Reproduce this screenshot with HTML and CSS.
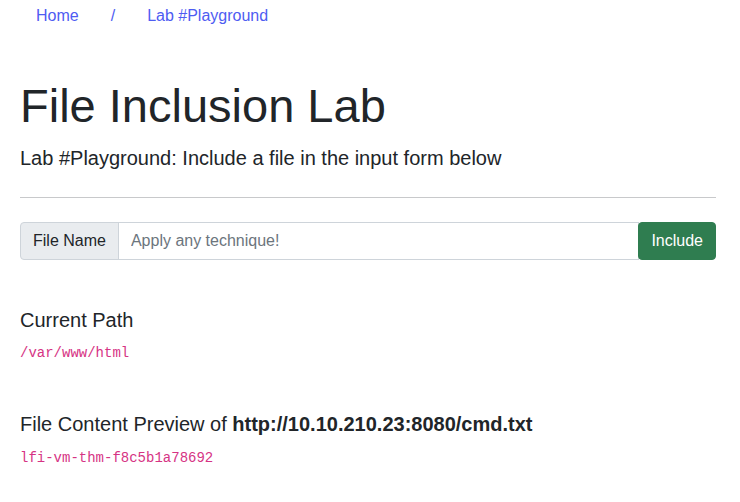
FILE: index.html
```html
<!DOCTYPE html>
<html lang="en">
<head>
<meta charset="utf-8">
<title>File Inclusion Lab</title>
<link rel="stylesheet" href="styles.css">
</head>
<body>
<div class="container">
  <nav class="crumbs">
    <a class="crumb" href="#">Home</a>
    <a class="crumb" href="#">/</a>
    <a class="crumb" href="#">Lab #Playground</a>
  </nav>
  <h1 class="title">File Inclusion Lab</h1>
  <p class="lead">Lab #Playground: Include a file in the input form below</p>
  <hr class="rule">
  <form class="input-group">
    <span class="addon">File Name</span>
    <input class="field" type="text" placeholder="Apply any technique!">
    <button class="btn" type="button">Include</button>
  </form>
  <section class="section first">
    <h5 class="heading">Current Path</h5>
    <code class="code">/var/www/html</code>
  </section>
  <section class="section second">
    <h5 class="heading">File Content Preview of <b>http://10.10.210.23:8080/cmd.txt</b></h5>
    <code class="code">lfi-vm-thm-f8c5b1a78692</code>
  </section>
</div>
</body>
</html>
```

FILE: styles.css
```css
* { box-sizing: border-box; }
html, body { margin: 0; background: #fff; }
body {
  font-family: "Liberation Sans", Arial, sans-serif;
  font-size: 16px;
  line-height: 1.5;
  color: #212529;
}
.container { padding: 0 24px 0 20px; }
.crumbs { display: flex; padding-top: 4px; }
.crumb {
  padding: 0 16px;
  line-height: 24px;
  color: #4e5cf2;
  text-decoration: none;
}
.title {
  margin: 50px 0 9px;
  font-size: 47px;
  line-height: 1.2;
  font-weight: 400;
}
.lead { margin: 0; font-size: 20px; line-height: 30px; }
.rule {
  margin: 24px 0;
  border: 0;
  border-top: 1px solid #c8c9cb;
  height: 0;
}
.input-group { display: flex; height: 38px; }
.addon {
  padding: 0 12px;
  display: flex;
  align-items: center;
  background: #e9ecef;
  border: 1px solid #ced4da;
  border-radius: 4px 0 0 4px;
  color: #212529;
  white-space: nowrap;
}
.field {
  flex: 1;
  min-width: 0;
  margin-left: -1px;
  padding: 0 12px;
  border: 1px solid #ced4da;
  border-radius: 0;
  font: inherit;
  color: #212529;
  outline: none;
}
.field::placeholder { color: #6c757d; opacity: 1; }
.btn {
  margin-left: -1px;
  padding: 0 12px;
  border: 1px solid #2f7d50;
  border-radius: 4px;
  background: #2f7d50;
  color: #fff;
  font: inherit;
}
.section.first { margin-top: 48px; }
.section.second { margin-top: 48px; }
.heading {
  margin: 0 0 11px;
  font-size: 20px;
  line-height: 24px;
  font-weight: 400;
}
.section.second .heading { margin-bottom: 12px; }
.heading b { font-weight: 700; }
.code {
  display: block;
  font-family: "Liberation Mono", "Courier New", monospace;
  font-size: 14px;
  line-height: 21px;
  color: #d63384;
}
```
